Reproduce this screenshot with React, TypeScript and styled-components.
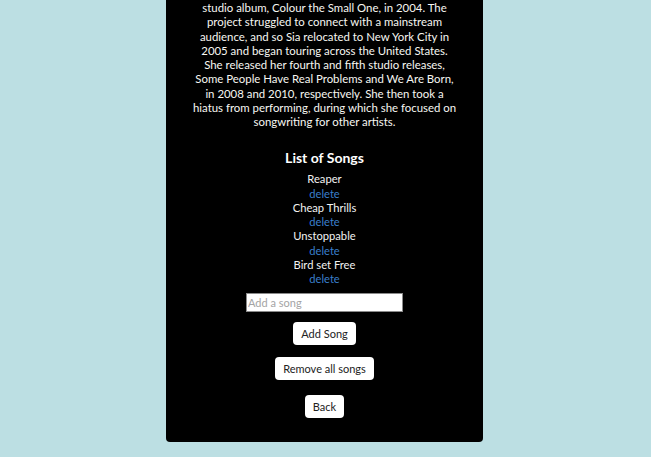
import React from "react";
import styled, { createGlobalStyle } from "styled-components";

const GlobalStyle = createGlobalStyle`
  html, body {
    margin: 0;
    background: #bcdfe3;
    font-family: "Lato", "Noto Sans", sans-serif;
  }
  body {
    padding: 0 2px 0 0;
  }
`;

const Card = styled.main`
  width: 317px;
  margin: 0 auto;
  background: #000;
  border-radius: 0 0 4px 4px;
  padding: 1px 0 24px;
  display: flex;
  flex-direction: column;
  align-items: center;
  box-sizing: border-box;
`;

const Bio = styled.p`
  margin: 0;
  color: #f7f7f2;
  font-size: 11.4px;
  line-height: 14.25px;
  text-align: center;
  white-space: nowrap;
`;

const Heading = styled.h2`
  margin: 20px 0 5px;
  color: #fff;
  font-size: 14px;
  line-height: 18px;
  font-weight: 700;
`;

const SongList = styled.ul`
  list-style: none;
  margin: 0;
  padding: 0;
  display: flex;
  flex-direction: column;
  align-items: center;
`;

const Song = styled.li`
  display: flex;
  flex-direction: column;
  align-items: center;
  font-size: 11.2px;
  line-height: 14.25px;
  color: #f2f2f2;
`;

const DeleteLink = styled.a`
  color: #3a7fcb;
  text-decoration: none;
  cursor: pointer;
`;

const SongInput = styled.input`
  margin-top: 7px;
  width: 157px;
  height: 19px;
  box-sizing: border-box;
  border: 1px solid #8a8a8a;
  background: #fff;
  padding: 0 1px;
  font-family: inherit;
  font-size: 11px;
  color: #222;
  outline: none;
  &::placeholder {
    color: #a4a4a4;
  }
`;

const Button = styled.button<{ $gap: number }>`
  margin-top: ${(p) => p.$gap}px;
  height: 23px;
  padding: 0 8px;
  background: #fff;
  color: #222;
  border: none;
  border-radius: 4px;
  font-family: inherit;
  font-size: 11px;
  cursor: pointer;
`;

const bioLines = [
  "studio album, Colour the Small One, in 2004. The",
  "project struggled to connect with a mainstream",
  "audience, and so Sia relocated to New York City in",
  "2005 and began touring across the United States.",
  "She released her fourth and fifth studio releases,",
  "Some People Have Real Problems and We Are Born,",
  "in 2008 and 2010, respectively. She then took a",
  "hiatus from performing, during which she focused on",
  "songwriting for other artists.",
];

const songs = ["Reaper", "Cheap Thrills", "Unstoppable", "Bird set Free"];

export default function App() {
  return (
    <>
      <GlobalStyle />
      <Card>
        <Bio>
          {bioLines.map((l, i) => (
            <React.Fragment key={i}>
              {l}
              {i < bioLines.length - 1 && <br />}
            </React.Fragment>
          ))}
        </Bio>
        <Heading>List of Songs</Heading>
        <SongList>
          {songs.map((s) => (
            <Song key={s}>
              <span>{s}</span>
              <DeleteLink>delete</DeleteLink>
            </Song>
          ))}
        </SongList>
        <SongInput placeholder="Add a song" />
        <Button $gap={10}>Add Song</Button>
        <Button $gap={12}>Remove all songs</Button>
        <Button $gap={15}>Back</Button>
      </Card>
    </>
  );
}
